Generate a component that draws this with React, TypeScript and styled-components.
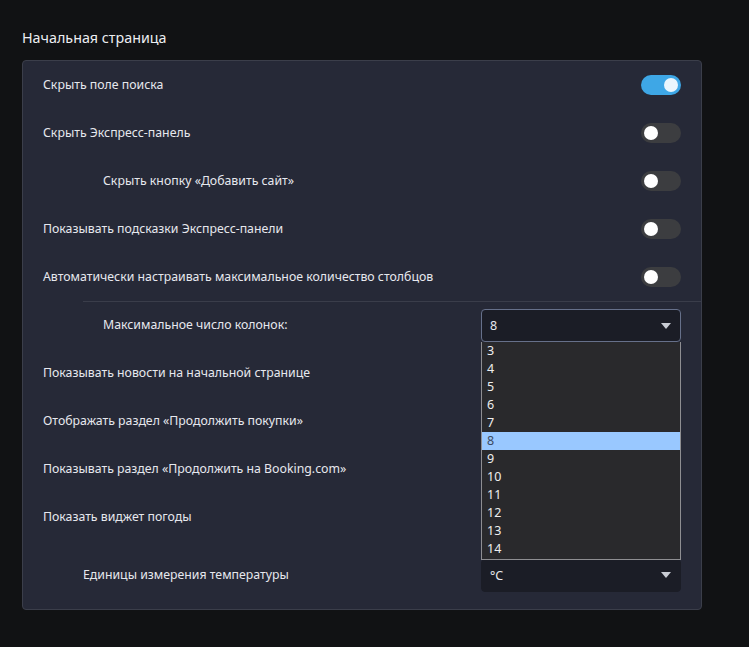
import styled, { createGlobalStyle } from "styled-components";

const GlobalStyle = createGlobalStyle`
    html, body {
        margin: 0;
        padding: 0;
        background-color: #111214;
    }

    body {
        font-family: "Noto Sans", sans-serif;
        color: #e8e9ed;
    }
`

interface RowData {
    label: string
    indent?: number
    toggle?: boolean
}

const toggleRows: RowData[] = [
    { label: "Скрыть поле поиска", toggle: true },
    { label: "Скрыть Экспресс-панель", toggle: false },
    { label: "Скрыть кнопку «Добавить сайт»", indent: 60, toggle: false },
    { label: "Показывать подсказки Экспресс-панели", toggle: false },
    { label: "Автоматически настраивать максимальное количество столбцов", toggle: false },
]

const lowerRows: RowData[] = [
    { label: "Показывать новости на начальной странице" },
    { label: "Отображать раздел «Продолжить покупки»" },
    { label: "Показывать раздел «Продолжить на Booking.com»" },
    { label: "Показать виджет погоды" },
]

const columnOptions = [3, 4, 5, 6, 7, 8, 9, 10, 11, 12, 13, 14];

function Caret() {
    return (
        <svg width="10" height="6" viewBox="0 0 10 6">
            <path d="M0 0 L10 0 L5 6 Z" fill="#c9ccd4" />
        </svg>
    );
}

export default function App() {
    return (
        <Page>
            <GlobalStyle />
            <Title>Начальная страница</Title>
            <Card>
                {toggleRows.map((row) => (
                    <Row key={row.label}>
                        <Label indent={row.indent ?? 0}>{row.label}</Label>
                        <Toggle on={row.toggle!}><Knob on={row.toggle!} /></Toggle>
                    </Row>
                ))}
                <Divider />
                <SelectRow>
                    <Label indent={60}>Максимальное число колонок:</Label>
                    <SelectWrap>
                        <Select focused>
                            <span>8</span>
                            <Caret />
                        </Select>
                        <OptionList>
                            {columnOptions.map((n) => (
                                <Option key={n} selected={n === 8}>{n}</Option>
                            ))}
                        </OptionList>
                    </SelectWrap>
                </SelectRow>
                {lowerRows.map((row) => (
                    <Row key={row.label}>
                        <Label indent={0}>{row.label}</Label>
                    </Row>
                ))}
                <Spacer />
                <Row>
                    <Label indent={40}>Единицы измерения температуры</Label>
                    <Select>
                        <span>°C</span>
                        <Caret />
                    </Select>
                </Row>
            </Card>
        </Page>
    );
}

const Page = styled.div`
    width: 749px;
    height: 647px;
    box-sizing: border-box;
    padding: 28px 0 0 22px;
`

const Title = styled.h2`
    margin: 0 0 12px 0;
    padding-bottom: 1px;
    font-size: 14.3px;
    font-weight: 400;
    line-height: 19px;
    color: #eceef2;
`

const Card = styled.div`
    width: 680px;
    height: 550px;
    box-sizing: border-box;
    display: flex;
    flex-direction: column;

    padding: 0 20px 0 20px;

    background-color: #262937;
    border: 1px solid #3b3e4a;
    border-radius: 4px;
`

const Row = styled.div`
    display: flex;
    align-items: center;
    justify-content: space-between;

    height: 48px;
`

interface IndentProps {
    indent: number
}

const Label = styled.span<IndentProps>`
    padding-left: ${(props) => props.indent}px;
    padding-bottom: 2px;
    font-size: 12.3px;
    color: #e6e8ee;
`

interface ToggleProps {
    on: boolean
}

const Toggle = styled.div<ToggleProps>`
    display: flex;
    align-items: center;
    justify-content: ${(props) => props.on ? "flex-end" : "flex-start"};

    width: 40px;
    height: 20px;
    box-sizing: border-box;
    padding: 0 3px;

    border-radius: 10px;
    background-color: ${(props) => props.on ? "#3ea7e6" : "#3c3d40"};
`

const Knob = styled.div<ToggleProps>`
    width: 14px;
    height: 14px;
    border-radius: 50%;
    background-color: ${(props) => props.on ? "#eaf6fd" : "#ffffff"};
`

const Divider = styled.div`
    height: 1px;
    margin: 0 -20px 0 40px;
    background-color: #3a3d4a;
`

const SelectRow = styled(Row)`
    height: 47px;
`

const SelectWrap = styled.div`
    position: relative;
`

interface SelectProps {
    focused?: boolean
}

const Select = styled.div<SelectProps>`
    display: flex;
    align-items: center;
    justify-content: space-between;

    width: 200px;
    height: 33px;
    box-sizing: border-box;
    padding: 0 9px 0 8px;

    background-color: #1b1d26;
    border: 1px solid ${(props) => props.focused ? "#66708a" : "#1b1d26"};
    border-radius: 4px;

    font-size: 12.5px;
    color: #e6e8ee;
`

const OptionList = styled.div`
    position: absolute;
    top: 33px;
    left: 0;
    z-index: 2;

    width: 200px;
    box-sizing: border-box;
    padding-bottom: 1px;

    background-color: #29292c;
    border: 1px solid #8e8e92;
    border-top: none;
`

interface OptionProps {
    selected: boolean
}

const Option = styled.div<OptionProps>`
    height: 18px;
    line-height: 18px;
    padding-left: 5px;

    font-size: 12.5px;
    color: ${(props) => props.selected ? "#3c4a60" : "#eeeeee"};
    background-color: ${(props) => props.selected ? "#99c8ff" : "transparent"};
`

const Spacer = styled.div`
    height: 10px;
`
